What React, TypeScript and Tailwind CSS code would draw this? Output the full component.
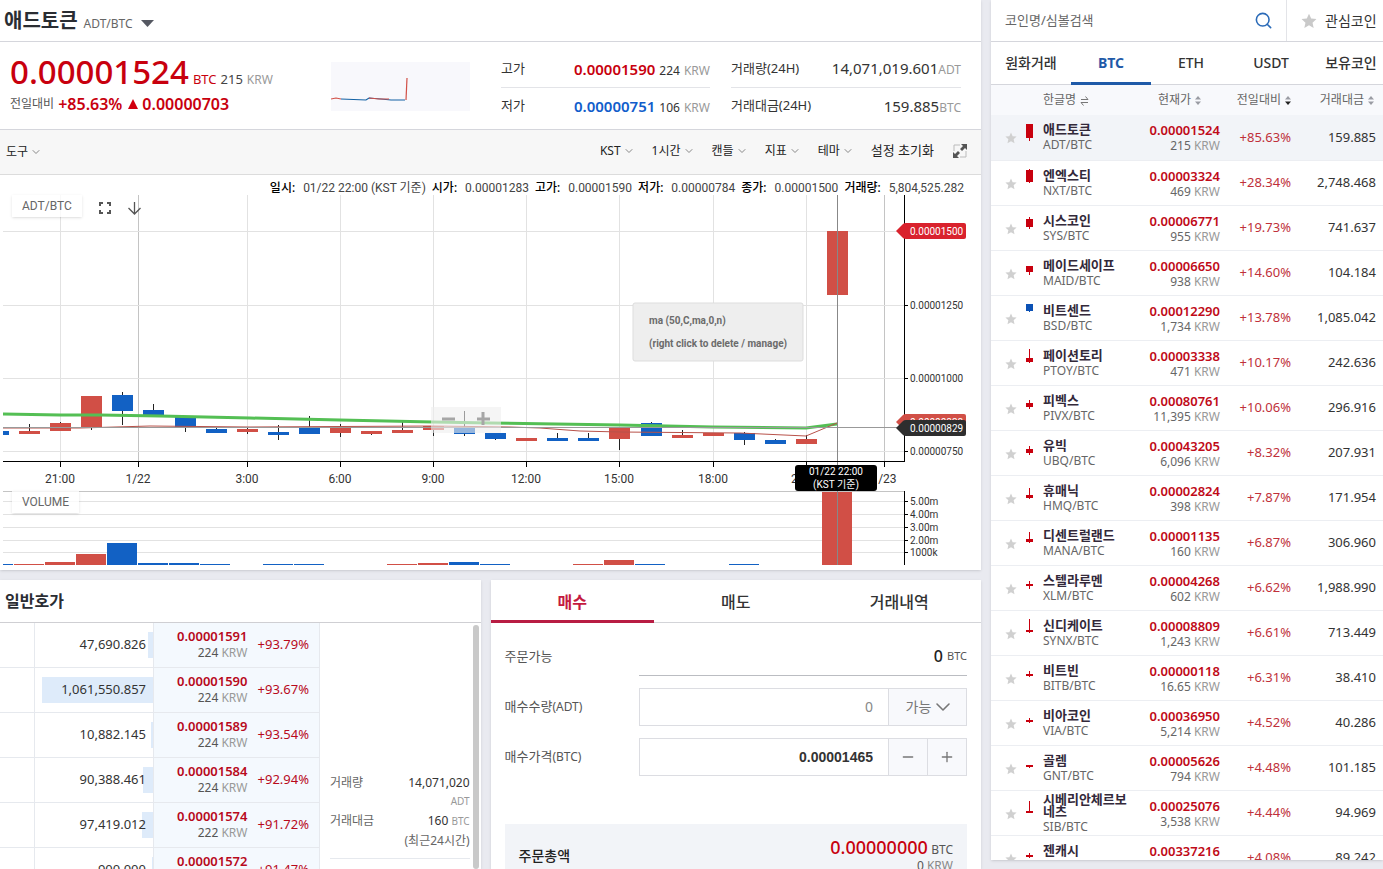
import React from 'react';
import { ChevronDown, Minus, Plus, Search } from 'lucide-react';

type Coin = {
  name: string;
  symbol: string;
  price: string;
  krw: string;
  change: string;
  volume: string;
  // [wick top, body top, body bottom, wick bottom]
  candle: number[];
  down?: boolean;
};

const coins: Coin[] = [
  { name: '애드토큰', symbol: 'ADT', price: '0.00001524', krw: '215', change: '+85.63%', volume: '159.885', candle: [3, 3, 17, 20] },
  { name: '엔엑스티', symbol: 'NXT', price: '0.00003324', krw: '469', change: '+28.34%', volume: '2,748.468', candle: [2, 3, 15, 16] },
  { name: '시스코인', symbol: 'SYS', price: '0.00006771', krw: '955', change: '+19.73%', volume: '741.637', candle: [5, 7, 15, 17] },
  { name: '메이드세이프', symbol: 'MAID', price: '0.00006650', krw: '938', change: '+14.60%', volume: '104.184', candle: [9, 9, 15, 18] },
  { name: '비트센드', symbol: 'BSD', price: '0.00012290', krw: '1,734', change: '+13.78%', volume: '1,085.042', candle: [2, 2, 9, 10], down: true },
  { name: '페이션토리', symbol: 'PTOY', price: '0.00003338', krw: '471', change: '+10.17%', volume: '242.636', candle: [2, 11, 15, 16] },
  { name: '피벡스', symbol: 'PIVX', price: '0.00080761', krw: '11,395', change: '+10.06%', volume: '296.916', candle: [8, 11, 15, 17] },
  { name: '유빅', symbol: 'UBQ', price: '0.00043205', krw: '6,096', change: '+8.32%', volume: '207.931', candle: [9, 12, 16, 18] },
  { name: '휴매닉', symbol: 'HMQ', price: '0.00002824', krw: '398', change: '+7.87%', volume: '171.954', candle: [6, 13, 16, 17] },
  { name: '디센트럴랜드', symbol: 'MANA', price: '0.00001135', krw: '160', change: '+6.87%', volume: '306.960', candle: [5, 12, 15, 16] },
  { name: '스텔라루멘', symbol: 'XLM', price: '0.00004268', krw: '602', change: '+6.62%', volume: '1,988.990', candle: [9, 12, 14, 17] },
  { name: '신디케이트', symbol: 'SYNX', price: '0.00008809', krw: '1,243', change: '+6.61%', volume: '713.449', candle: [2, 13, 15, 16] },
  { name: '비트빈', symbol: 'BITB', price: '0.00000118', krw: '16.65', change: '+6.31%', volume: '38.410', candle: [9, 12, 14, 15] },
  { name: '비아코인', symbol: 'VIA', price: '0.00036950', krw: '5,214', change: '+4.52%', volume: '40.286', candle: [11, 13, 15, 16] },
  { name: '골렘', symbol: 'GNT', price: '0.00005626', krw: '794', change: '+4.48%', volume: '101.185', candle: [13, 13, 15, 16] },
  { name: '시베리안체르보네츠', symbol: 'SIB', price: '0.00025076', krw: '3,538', change: '+4.44%', volume: '94.969', candle: [4, 14, 16, 16] },
  { name: '젠캐시', symbol: 'ZEN', price: '0.00337216', krw: '47,632', change: '+4.08%', volume: '89.242', candle: [11, 13, 15, 16] },
];

const asks = [
  { qty: '47,690.826', price: '0.00001591', krw: '224', change: '+93.79%', bar: 5 },
  { qty: '1,061,550.857', price: '0.00001590', krw: '224', change: '+93.67%', bar: 111 },
  { qty: '10,882.145', price: '0.00001589', krw: '224', change: '+93.54%', bar: 2 },
  { qty: '90,388.461', price: '0.00001584', krw: '224', change: '+92.94%', bar: 10 },
  { qty: '97,419.012', price: '0.00001574', krw: '222', change: '+91.72%', bar: 11 },
  { qty: '900.000', price: '0.00001572', krw: '222', change: '+91.47%', bar: 1 },
];

const UP = '#d14f46';
const DOWN = '#1261c4';

// center x, wick top, body top, body bottom, wick bottom, color
const candles: [number, number, number, number, number, string][] = [
  [29, 424, 431, 434, 434, UP],
  [60, 422, 423, 431, 431, UP],
  [91, 396, 396, 427, 430, UP],
  [122, 392, 395, 411, 425, DOWN],
  [153, 404, 410, 415, 415, DOWN],
  [185, 417, 417, 427, 432, DOWN],
  [216, 427, 429, 433, 433, DOWN],
  [247, 427, 429, 432, 434, UP],
  [278, 425, 432, 435, 440, DOWN],
  [309, 416, 428, 434, 434, DOWN],
  [340, 424, 427, 433, 437, UP],
  [371, 431, 431, 434, 435, UP],
  [402, 422, 430, 433, 433, UP],
  [433, 426, 426, 430, 436, UP],
  [464, 411, 428, 434, 436, DOWN],
  [495, 433, 433, 439, 440, DOWN],
  [526, 438, 438, 441, 441, UP],
  [557, 433, 438, 441, 441, DOWN],
  [588, 433, 438, 441, 441, DOWN],
  [619, 428, 428, 439, 450, UP],
  [651, 422, 423, 436, 436, DOWN],
  [682, 430, 435, 438, 438, UP],
  [713, 433, 433, 436, 436, UP],
  [744, 432, 433, 440, 445, DOWN],
  [775, 439, 440, 444, 444, DOWN],
  [806, 435, 439, 444, 444, UP],
  [837, 231, 231, 295, 295, UP],
];

const volumes: [number, number, string][] = [
  [14, 1, UP], [45, 3, UP], [76, 11, UP], [107, 22, DOWN], [138, 2, DOWN], [169, 2, DOWN], [200, 1, DOWN],
  [263, 1, DOWN], [294, 1, DOWN], [387, 1, UP], [418, 2, UP], [449, 3, DOWN], [480, 1, DOWN],
  [573, 1, UP], [604, 5, UP], [635, 1, DOWN], [729, 1, DOWN], [822, 73, UP],
];

const timeTicks: [number, string][] = [
  [60, '21:00'], [138, '1/22'], [247, '3:00'], [340, '6:00'], [433, '9:00'],
  [526, '12:00'], [619, '15:00'], [713, '18:00'], [806, '21:00'], [884, '1/23'],
];

const legend = [
  ['일시', '01/22 22:00 (KST 기준)'],
  ['시가', '0.00001283'],
  ['고가', '0.00001590'],
  ['저가', '0.00000784'],
  ['종가', '0.00001500'],
  ['거래량', '5,804,525.282'],
];

function Star({ className }: { className: string }) {
  return (
    <svg viewBox="0 0 24 24" className={className} fill="currentColor">
      <path d="M12 1l3.3 7.3 7.9.8-5.9 5.4 1.7 7.9L12 18.4l-7 4 1.7-7.9L.8 9.1l7.9-.8z" />
    </svg>
  );
}

function SortIcon({ active }: { active?: boolean }) {
  return (
    <svg viewBox="0 0 6 9" className="inline-block w-1.5 h-[9px] ml-1">
      <path d="M3 0l3 3.5H0z" fill="#9a9ca3" />
      <path d="M3 9l3-3.5H0z" fill={active ? '#222' : '#9a9ca3'} />
    </svg>
  );
}

function PriceTag({ y, color, label }: { y: number; color: string; label: string }) {
  return (
    <g>
      <path d={`M896 ${y}l7-7q1-1 3-1h58q2 0 2 2v12q0 2-2 2h-58q-2 0-3-1z`} fill={color} />
      <text x="910" y={y + 4} fontSize="10" fill="#fff">{label}</text>
    </g>
  );
}

function Chart() {
  return (
    <svg
      viewBox="0 195 981 375"
      className="block w-full font-[Roboto,'Noto_Sans_CJK_KR',sans-serif]"
      role="img"
      aria-label="ADT/BTC"
    >
      <g shapeRendering="crispEdges">
        {timeTicks.map(([x, label]) => (
          <rect key={x} x={x} y="195" width="1" height="266" fill={label.includes('/') ? '#c4c4c4' : '#e2e2e2'} />
        ))}
        {[231, 305, 378, 451].map((y) => (
          <rect key={y} x="3" y={y} width="901" height="1" fill="#e2e2e2" />
        ))}
        {[501, 514, 527, 540, 552].map((y) => (
          <rect key={y} x="3" y={y} width="901" height="1" fill="#e2e2e2" />
        ))}
        <rect x="3" y="491" width="901" height="1" fill="#c4c4c4" />

        <rect x="3" y="431" width="6" height="4" fill={DOWN} />
        {candles.map(([x, wickTop, top, bottom, wickBottom, color]) => (
          <g key={x}>
            <rect x={x} y={wickTop} width="1" height={wickBottom - wickTop} fill="#222" />
            <rect x={x - 10} y={top} width="21" height={bottom - top} fill={color} />
          </g>
        ))}
        <rect x="3" y="564" width="10" height="1" fill={DOWN} />
        {volumes.map(([x, h, color]) => (
          <rect key={x} x={x} y={565 - h} width="30" height={h} fill={color} />
        ))}
      </g>

      <polyline
        points="3,414 60,415 100,415 160,416 250,418 340,420 433,422 490,423 620,425 713,427 806,428 837,424"
        fill="none"
        stroke="#54bf54"
        strokeWidth="3"
      />
      <polyline
        points="3,428 80,428 150,426 250,427 433,426 510,427 540,428 580,431 620,432 740,433 806,436 837,423"
        fill="none"
        stroke="#b8524a"
        strokeWidth="1"
      />

      <g shapeRendering="crispEdges">
        <rect x="3" y="427" width="901" height="1" fill="#999" />
        <rect x="837" y="195" width="1" height="370" fill="#888" />
        <rect x="3" y="461" width="902" height="1" fill="#000" />
        <rect x="904" y="195" width="1" height="266" fill="#000" />
        <rect x="904" y="491" width="1" height="74" fill="#000" />
        {timeTicks.map(([x]) => (
          <rect key={x} x={x} y="461" width="1" height="6" fill="#000" />
        ))}
        {[305, 378, 451, 501, 514, 527, 540, 552].map((y) => (
          <rect key={y} x="904" y={y} width="4" height="1" fill="#000" />
        ))}
      </g>

      <g fontSize="12" fill="#333" textAnchor="middle">
        {timeTicks.map(([x, label]) => (
          <text key={x} x={x} y="483">{label}</text>
        ))}
      </g>
      <g fontSize="10" fill="#333">
        <text x="910" y="309">0.00001250</text>
        <text x="910" y="382">0.00001000</text>
        <text x="910" y="455">0.00000750</text>
        <text x="910" y="505">5.00m</text>
        <text x="910" y="518">4.00m</text>
        <text x="910" y="531">3.00m</text>
        <text x="910" y="544">2.00m</text>
        <text x="910" y="556">1000k</text>
      </g>

      <g>
        <rect x="431" y="407" width="70" height="26" fill="#eee" opacity="0.6" />
        <path d="M442 419h13M477 419h13M483 412v13" stroke="#a6a6a6" strokeWidth="3" />
      </g>

      <PriceTag y={231} color="#d9222d" label="0.00001500" />
      <PriceTag y={422} color={UP} label="0.00000838" />
      <PriceTag y={428} color="#2e2e2e" label="0.00000829" />

      <rect x="633" y="303" width="170" height="58" rx="2" fill="#eee" stroke="#ddd" />
      <g fontSize="10" fontWeight="bold" fill="#6b6b6b">
        <text x="649" y="324">ma (50,C,ma,0,n)</text>
        <text x="649" y="347">(right click to delete / manage)</text>
      </g>

      <rect x="795" y="465" width="82" height="26" rx="3" fill="#000" />
      <g fontSize="10" fill="#fff" textAnchor="middle">
        <text x="836" y="475">01/22 22:00</text>
        <text x="836" y="488">(KST 기준)</text>
      </g>
    </svg>
  );
}

function MenuButton({ children }: { children: React.ReactNode }) {
  return (
    <button type="button" className="flex items-center gap-0.5 text-xs">
      {children}
      <ChevronDown className="w-3 h-3 text-[#888]" strokeWidth={2} />
    </button>
  );
}

function ChartPanel() {
  return (
    <section className="bg-white shadow-sm">
      <header className="flex items-center h-[42px] px-1 border-b border-[#d5d6dc]">
        <h1 className="text-xl leading-6 font-bold text-[#2a2d33]">애드토큰</h1>
        <span className="ml-1.5 mt-1.5 text-xs text-[#666]">ADT/BTC</span>
        <button type="button" aria-label="ADT/BTC" className="ml-2 mt-1.5">
          <svg viewBox="0 0 13 7" className="w-[13px] h-[7px]"><path d="M0 0h13L6.500 7z" fill="#555862" /></svg>
        </button>
      </header>

      <div className="flex h-[88px] pl-2.5 pr-5 pt-2 border-b border-[#d5d6dc]">
        <div className="flex-1 pt-1.5">
          <div className="flex items-baseline gap-1 h-[34px] text-[13px] leading-8">
            <strong className="text-[33px] leading-8 font-medium text-[#c8000e]">0.00001524</strong>
            <span className="text-[#c8000e]">BTC</span>
            <span className="text-[#444]">215</span>
            <span className="text-xs text-[#999]">KRW</span>
          </div>
          <div className="flex items-center gap-1 h-7 text-base font-semibold text-[#c8000e]">
            <span className="text-xs font-normal text-[#555]">전일대비</span>
            <span>+85.63%</span>
            <svg viewBox="0 0 10 10" className="w-2.5 h-2.5 ml-0.5"><path d="M5 0l5 10H0z" fill="#d1000f" /></svg>
            <span>0.00000703</span>
          </div>
        </div>
        <svg viewBox="0 0 139 49" className="w-[139px] h-[49px] mt-3 mr-[31px] bg-[#f8f8fc]" fill="none" strokeWidth="1.2">
          <path d="M0 37l5-1 5 1" stroke="#d14f46" />
          <path d="M10 37l25 1 3-2 12 1 10 1 14 0" stroke="#1261a4" />
          <path d="M38 36l10 1 10 0" stroke="#d14f46" />
          <path d="M75 38l1-22" stroke="#d14f46" />
        </svg>
        <dl className="w-[209px] mr-[21px] text-[#333]">
          <div className="flex items-center h-[38px] border-b border-[#e3e4e8]">
            <dt className="flex-1 text-[13px]">고가</dt>
            <dd className="flex items-baseline gap-1 text-xs">
              <b className="text-[15px] font-semibold text-[#c8000e]">0.00001590</b> 224 <span className="text-[#999]">KRW</span>
            </dd>
          </div>
          <div className="flex items-center h-9">
            <dt className="flex-1 text-[13px]">저가</dt>
            <dd className="flex items-baseline gap-1 text-xs">
              <b className="text-[15px] font-semibold text-[#115dcb]">0.00000751</b> 106 <span className="text-[#999]">KRW</span>
            </dd>
          </div>
        </dl>
        <dl className="w-[230px] text-[#333]">
          <div className="flex items-center h-[38px] border-b border-[#e3e4e8]">
            <dt className="flex-1 text-[13px]">거래량(24H)</dt>
            <dd className="text-[15px]">14,071,019.601<span className="text-xs text-[#999]">ADT</span></dd>
          </div>
          <div className="flex items-center h-9">
            <dt className="flex-1 text-[13px]">거래대금(24H)</dt>
            <dd className="text-[15px]">159.885<span className="text-xs text-[#999]">BTC</span></dd>
          </div>
        </dl>
      </div>

      <div className="flex items-center justify-between h-[45px] pl-1.5 pr-3.5 bg-[#f7f7f7] border-b border-[#dcdcdc] text-[13px] text-[#222]">
        <MenuButton>도구</MenuButton>
        <div className="flex items-center gap-[17px] pb-0.5">
          <MenuButton>KST</MenuButton>
          <MenuButton>1시간</MenuButton>
          <MenuButton>캔들</MenuButton>
          <MenuButton>지표</MenuButton>
          <MenuButton>테마</MenuButton>
          <button type="button">설정 초기화</button>
          <button type="button" aria-label="전체화면">
            <svg viewBox="0 0 14 14" className="w-3.5 h-3.5 ml-0.5">
              <path d="M1 7V1h6M13 7v6H7" fill="none" stroke="#bbb" />
              <path d="M8 0h6v6l-2-2-3 3-2-2 3-3zM6 14H0V8l2 2 3-3 2 2-3 3z" fill="#555" />
            </svg>
          </button>
        </div>
      </div>

      <div className="flex justify-end gap-1.5 h-5 pt-1 pr-[17px] text-xs leading-[18px] text-[#444] whitespace-nowrap font-[Roboto,'Noto_Sans_CJK_KR',sans-serif]">
        {legend.map(([label, value]) => (
          <span key={label}>
            <b className="mr-2 font-medium text-black">{label}:</b>
            {value}
          </span>
        ))}
      </div>

      <div className="relative font-[Roboto,sans-serif] text-xs text-[#666]">
        <Chart />
        <div className="absolute left-3 top-0 flex items-center gap-[17px]">
          <span className="px-2.5 h-[22px] leading-[22px] bg-white/80 shadow">ADT/BTC</span>
          <button type="button" aria-label="확대" className="mt-1">
            <svg viewBox="0 0 12 12" className="w-3 h-3" fill="none" stroke="#555" strokeWidth="2">
              <path d="M1 4V1h3M8 1h3v3M11 8v3H8M4 11H1V8" />
            </svg>
          </button>
          <button type="button" aria-label="아래로" className="mt-1">
            <svg viewBox="0 0 13 13" className="w-[13px] h-[13px]" fill="none" stroke="#555" strokeWidth="1.3">
              <path d="M6.500 0v12M.5 6l6 6 6-6" />
            </svg>
          </button>
        </div>
        <span className="absolute left-3 top-[79%] px-2.5 h-[22px] leading-[22px] bg-white/80 shadow">VOLUME</span>
      </div>
    </section>
  );
}

function OrderBook() {
  return (
    <section className="flex-49 min-w-0 flex flex-col min-h-0 bg-white shadow-sm overflow-hidden">
      <h2 className="shrink-0 h-[43px] pl-[5px] border-b border-[#cfcfd3] text-base leading-[42px] font-bold text-[#2a2d33]">일반호가</h2>
      <div className="flex flex-1 min-h-0 overflow-hidden">
        <table className="w-[320px] shrink-0 table-fixed self-start text-[#333]">
          <colgroup>
            <col className="w-[34px]" />
            <col />
            <col className="w-[94px]" />
            <col className="w-[72px]" />
          </colgroup>
          <tbody>
            {asks.map((ask, i) => (
              <tr key={ask.price} className={i === 0 ? 'h-11 border-b border-[#e6e9ee]' : 'h-[45px] border-b border-[#e6e9ee]'}>
                <td className="border-r border-[#e6e9ee]" />
                <td className="p-0 border-r border-[#e6e9ee]">
                  <div className="relative h-[26px] pr-[7px] text-right text-[13px] leading-6">
                    <span className="absolute right-0 top-0 h-[26px] bg-[#deebfa]" style={{ width: ask.bar }} />
                    <span className="relative">{ask.qty}</span>
                  </div>
                </td>
                <td className="p-0 bg-[#f4f9fe] text-right leading-4">
                  <b className="block text-[13px] leading-4 font-semibold text-[#b80a1c]">{ask.price}</b>
                  <span className="block text-xs leading-[18px] text-[#555]">{ask.krw} <span className="text-[#999]">KRW</span></span>
                </td>
                <td className="p-0 pr-2.5 bg-[#f4f9fe] border-r border-[#e6e9ee] text-right text-[13px] text-[#b80a1c]">{ask.change}</td>
              </tr>
            ))}
          </tbody>
        </table>
        <div className="flex-1 pt-[150px] pl-2.5 pr-[3px]">
          <dl className="flex flex-wrap justify-between pb-2 border-b border-[#e6e9ee] text-xs leading-[19px] text-[#666]">
            <dt>거래량</dt>
            <dd className="text-[#333]">14,071,020</dd>
            <dd className="w-full text-right text-[10px] leading-[19px] text-[#999]">ADT</dd>
            <dt>거래대금</dt>
            <dd className="text-[#333]">160 <span className="text-[10px] text-[#999]">BTC</span></dd>
            <dd className="w-full text-right">(최근24시간)</dd>
          </dl>
        </div>
        <div className="w-1.5 mt-0.5 mr-0.5 rounded-full bg-[#c9c9c9]" />
      </div>
    </section>
  );
}

function OrderForm() {
  return (
    <section className="flex-50 min-w-0 min-h-0 bg-white shadow-sm overflow-hidden text-[#555]">
      <nav className="flex h-[43px] border-b border-[#d3d4d8] text-base font-medium text-[#333]">
        <button type="button" className="flex-1 h-[43px] pt-[3px] border-b-3 border-[#b81d43] font-bold text-[#c41a3f]">매수</button>
        <button type="button" className="flex-1 pt-0.5">매도</button>
        <button type="button" className="flex-1 pt-0.5">거래내역</button>
      </nav>
      <form className="px-3.5 pt-3.5 text-[13px]">
        <div className="flex items-center">
          <span className="w-[134px]">주문가능</span>
          <div className="flex flex-1 items-center justify-end gap-1 h-[39px] border-b border-[#bbbdc2]">
            <b className="text-base font-medium text-[#222]">0</b>
            <span className="text-[11px]">BTC</span>
          </div>
        </div>
        <div className="flex items-center mt-3">
          <label htmlFor="amount" className="w-[134px]">매수수량<span className="text-xs">(ADT)</span></label>
          <div className="flex flex-1 h-[38px] border border-[#dcdde2]">
            <input id="amount" type="text" placeholder="0" className="flex-1 min-w-0 px-[15px] text-right text-sm outline-none placeholder:text-[#888]" />
            <button type="button" className="flex items-center justify-center w-[78px] pl-1.5 bg-[#f8f9fc] border-l border-[#dcdde2] text-sm text-[#777]">
              가능
              <ChevronDown className="w-6 h-6" strokeWidth={1.600} />
            </button>
          </div>
        </div>
        <div className="flex items-center mt-3">
          <label htmlFor="price" className="w-[134px]">매수가격<span className="text-xs">(BTC)</span></label>
          <div className="flex flex-1 h-[38px] border border-[#dcdde2]">
            <input id="price" type="text" defaultValue="0.00001465" className="flex-1 min-w-0 px-[15px] text-right text-sm font-bold text-[#333] outline-none font-['Liberation_Sans',sans-serif]" />
            <button type="button" aria-label="감소" className="flex items-center justify-center w-[39px] bg-[#f8f9fc] border-l border-[#dcdde2] text-[#777]">
              <Minus className="w-4 h-4" />
            </button>
            <button type="button" aria-label="증가" className="flex items-center justify-center w-[39px] bg-[#f8f9fc] border-l border-[#dcdde2] text-[#777]">
              <Plus className="w-4 h-4" />
            </button>
          </div>
        </div>
        <div className="flex items-center justify-between mt-12 px-3.5 h-16 bg-[#f2f4f8]">
          <span className="text-sm font-medium text-[#222]">주문총액</span>
          <div className="text-right">
            <div className="h-5 leading-5"><b className="text-lg leading-5 font-medium text-[#c8000e]">0.00000000</b> <span className="text-xs">BTC</span></div>
            <div className="leading-[18px] text-xs">0 <span className="text-[#888]">KRW</span></div>
          </div>
        </div>
      </form>
    </section>
  );
}

function CoinList() {
  return (
    <aside className="flex flex-col w-[392px] shrink-0 mb-[9px] bg-white shadow-sm overflow-hidden">
      <div className="flex shrink-0 h-[42px] border-b border-[#d5d6dc]">
        <input type="text" aria-label="코인명/심볼검색" placeholder="코인명/심볼검색" className="flex-1 min-w-0 pl-3.5 text-[13px] outline-none placeholder:text-[#666]" />
        <button type="button" aria-label="검색" className="px-[13px]">
          <Search className="w-[19px] h-[19px] text-[#2b6bb8]" strokeWidth={2} />
        </button>
        <button type="button" className="flex items-center gap-2 w-[97px] pl-3.5 border-l border-[#e3e4e8] text-sm text-[#333]">
          <Star className="w-4 h-4 text-[#c9c9c9]" />
          관심코인
        </button>
      </div>
      <nav className="flex shrink-0 h-[43px] border-b border-[#d5d6dc] text-sm font-medium text-[#333]">
        <button type="button" className="w-20">원화거래</button>
        <button type="button" className="w-20 h-[43px] pt-0.5 border-b-3 border-[#1f5aa8] font-bold text-[#1f5aa8]">BTC</button>
        <button type="button" className="w-20">ETH</button>
        <button type="button" className="w-20">USDT</button>
        <button type="button" className="flex-1 pl-2">보유코인</button>
      </nav>
      <div className="flex-1 min-h-0 overflow-hidden">
        <table className="w-full table-fixed">
          <colgroup>
            <col className="w-8" />
            <col className="w-5" />
            <col />
            <col className="w-[86px]" />
            <col className="w-[71px]" />
            <col className="w-[92px]" />
          </colgroup>
          <thead>
            <tr className="h-[30px] bg-[#f8f9fc] text-xs text-[#666]">
              <th colSpan={2} />
              <th className="p-0 text-left font-normal">
                한글명
                <svg viewBox="0 0 9 10" className="inline-block w-[9px] h-2.5 ml-1" fill="none" stroke="#777">
                  <path d="M1 3.500h7M5.500 .5l2.500 3M8 6.500H1M3.500 9.500L1 6.500" />
                </svg>
              </th>
              <th className="p-0 pr-[19px] text-right font-normal whitespace-nowrap">현재가<SortIcon /></th>
              <th className="p-0 text-right font-normal whitespace-nowrap">전일대비<SortIcon active /></th>
              <th className="p-0 pr-[9px] text-right font-normal whitespace-nowrap">거래대금<SortIcon /></th>
            </tr>
          </thead>
          <tbody>
            {coins.map((coin, i) => {
              const [wickTop, top, bottom, wickBottom] = coin.candle;
              const color = coin.down ? '#0b51b5' : '#c8000e';
              return (
                <tr key={coin.symbol} className={i === 0 ? 'h-[45px] border-b border-[#eceef2] bg-[#f2f4f8]' : 'h-[45px] border-b border-[#eceef2]'}>
                  <td className="p-0 pl-3.5">
                    <button type="button" aria-label={coin.name} className="block mt-0.5">
                      <Star className="w-3 h-3 text-[#d0d0d0]" />
                    </button>
                  </td>
                  <td className="p-0 pl-[3px]">
                    <svg viewBox="0 0 7 32" className="block w-[7px] h-8" shapeRendering="crispEdges">
                      <rect x="3" y={wickTop} width="1" height={wickBottom - wickTop} fill={color} />
                      <rect x="0" y={top} width="7" height={bottom - top} fill={color} />
                    </svg>
                  </td>
                  <td className="p-0 text-[#666]">
                    <b className="block py-0.5 text-[13px] leading-3 text-[#33293a] break-all">{coin.name}</b>
                    <span className="block text-xs leading-4">{coin.symbol}/BTC</span>
                  </td>
                  <td className="p-0 pt-0.5 text-right leading-4">
                    <b className="block text-[13px] leading-4 font-semibold text-[#c00a18]">{coin.price}</b>
                    <span className="block text-xs leading-4 text-[#666]">{coin.krw} <span className="text-[#999]">KRW</span></span>
                  </td>
                  <td className="p-0 text-right text-[13px] text-[#c0303a]">{coin.change}</td>
                  <td className="p-0 pr-[7px] text-right text-[13px] text-[#333]">{coin.volume}</td>
                </tr>
              );
            })}
          </tbody>
        </table>
      </div>
    </aside>
  );
}

export default function App() {
  return (
    <div className="flex gap-2.5 h-screen overflow-hidden bg-[#e9eaf0] font-['Noto_Sans','Noto_Sans_CJK_KR',sans-serif]">
      <main className="flex flex-col flex-1 min-w-0 gap-2.5">
        <ChartPanel />
        <div className="flex flex-1 gap-2.5 min-h-0">
          <OrderBook />
          <OrderForm />
        </div>
      </main>
      <CoinList />
    </div>
  );
}
